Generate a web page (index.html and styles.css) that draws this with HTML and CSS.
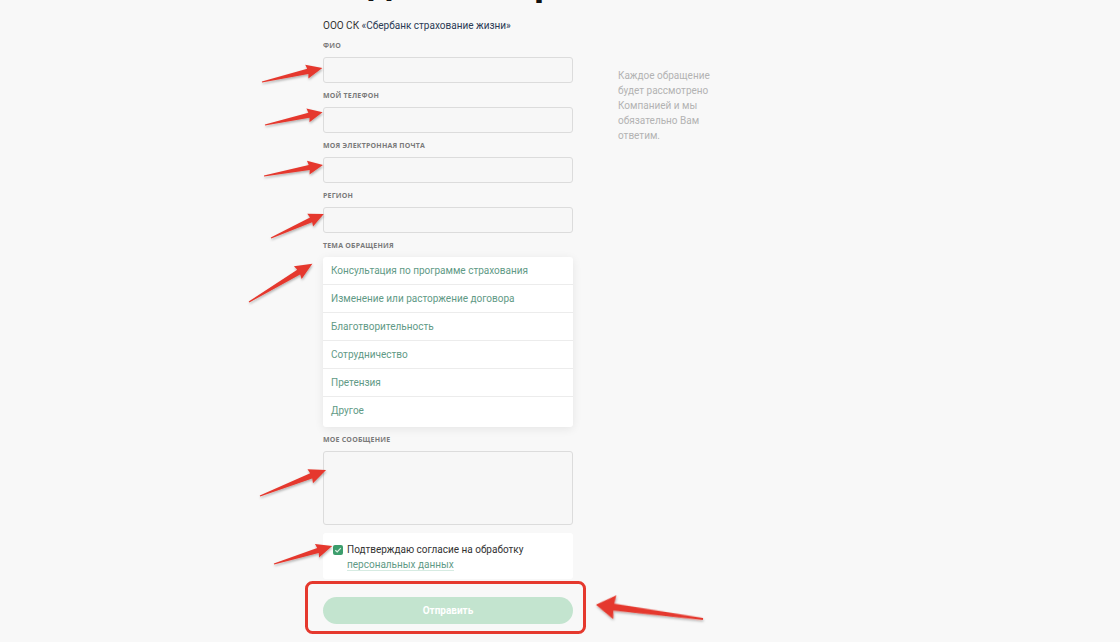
FILE: index.html
```html
<!DOCTYPE html>
<html lang="ru">
<head>
  <meta charset="UTF-8">
  <meta name="viewport" content="width=device-width, initial-scale=1.0">
  <title>Задать вопрос</title>
  <link rel="stylesheet" href="styles.css">
</head>
<body>
  <div class="page">
    <!-- Form column -->
    <form class="feedback-form">
      <h1 class="title">Задать вопрос</h1>
      <p class="company">ООО СК <span class="company-name">«Сбербанк страхование жизни»</span></p>

      <div class="field">
        <label class="field-label">ФИО</label>
        <input class="field-input" type="text">
      </div>
      <div class="field">
        <label class="field-label">Мой телефон</label>
        <input class="field-input" type="text">
      </div>
      <div class="field">
        <label class="field-label">Моя электронная почта</label>
        <input class="field-input" type="text">
      </div>
      <div class="field">
        <label class="field-label">Регион</label>
        <input class="field-input" type="text">
      </div>

      <div class="field">
        <label class="field-label">Тема обращения</label>
        <ul class="topic-list">
          <li>Консультация по программе страхования</li>
          <li>Изменение или расторжение договора</li>
          <li>Благотворительность</li>
          <li>Сотрудничество</li>
          <li>Претензия</li>
          <li>Другое</li>
        </ul>
      </div>

      <div class="field">
        <label class="field-label">Мое сообщение</label>
        <textarea class="field-textarea"></textarea>
      </div>

      <div class="agree-card">
        <span class="checkbox">
          <svg width="10" height="10" viewBox="0 0 10 10"><path d="M2.3 5.2 L4.2 7 L7.8 3.2" fill="none" stroke="#d9f0e2" stroke-width="1.2"/></svg>
        </span>
        <p class="agree-text">Подтверждаю согласие на обработку <a class="agree-link">персональных данных</a></p>
      </div>

      <button class="submit" type="button">Отправить</button>
    </form>

    <!-- Side note -->
    <aside class="note">
      Каждое обращение будет рассмотрено Компанией и мы обязательно Вам ответим.
    </aside>
  </div>

  <!-- Red annotation arrows -->
  <svg class="annotations" width="1120" height="642" viewBox="0 0 1120 642">
    <defs>
      <filter id="arrow-shadow" x="-20%" y="-50%" width="140%" height="200%">
        <feDropShadow dx="0.5" dy="1.5" stdDeviation="0.8" flood-color="#000" flood-opacity="0.3"/>
      </filter>
    </defs>
    <g fill="#e5392e" filter="url(#arrow-shadow)">
      <g transform="translate(262,82) rotate(-13.1)"><polygon points="0,-0.6 47,-2.6 46,-7 62,0 46,7 47,2.6 0,0.6"/></g>
      <g transform="translate(265,125) rotate(-12.6)"><polygon points="0,-0.6 45,-2.6 44,-7 59,0 44,7 45,2.6 0,0.6"/></g>
      <g transform="translate(264,176) rotate(-10.6)"><polygon points="0,-0.6 46,-2.6 45,-7 60,0 45,7 46,2.6 0,0.6"/></g>
      <g transform="translate(271,238) rotate(-24.4)"><polygon points="0,-0.6 44,-2.6 43,-7 58,0 43,7 44,2.6 0,0.6"/></g>
      <g transform="translate(249,302) rotate(-31.1)"><polygon points="0,-0.6 58,-2.8 57,-7.5 74,0 57,7.5 58,2.8 0,0.6"/></g>
      <g transform="translate(260,496) rotate(-21.5)"><polygon points="0,-0.6 55,-2.8 54,-7.5 71,0 54,7.5 55,2.8 0,0.6"/></g>
      <g transform="translate(274,564) rotate(-17.2)"><polygon points="0,-0.6 46,-2.6 45,-7 61,0 45,7 46,2.6 0,0.6"/></g>
      <g transform="translate(703,619) rotate(-172.4)"><polygon points="0,-1 90,-3.5 89,-12 108,0 89,12 90,3.5 0,1"/></g>
    </g>
    <rect x="306.5" y="582.5" width="278" height="50" rx="6" fill="none" stroke="#e5392e" stroke-width="3"/>
  </svg>
</body>
</html>
```

FILE: styles.css
```css
/* General */
body {
  margin: 0;
  padding: 0;
  background: #f8f8f8;
  font-family: Roboto, 'Open Sans', sans-serif;
  color: #333;
  height: 642px;
  overflow: hidden;
  position: relative;
}

.page {
  display: flex;
  align-items: flex-start;
  gap: 45px;
  padding-left: 323px;
}

/* Form */
.feedback-form {
  width: 250px;
  display: flex;
  flex-direction: column;
}

.title {
  margin: -39px 0 0;
  height: 40px;
  font-family: 'Open Sans', sans-serif;
  font-size: 36px;
  line-height: 40px;
  font-weight: 700;
  white-space: nowrap;
  color: #111;
}

.company {
  margin: 17px 0 8px;
  font-size: 10px;
  line-height: 15px;
  color: #333;
}

.company-name {
  color: #2b3a55;
}

.field {
  display: flex;
  flex-direction: column;
  margin-bottom: 8px;
}

.field-label {
  height: 10px;
  line-height: 10px;
  margin-bottom: 6px;
  font-family: 'Open Sans', sans-serif;
  font-size: 7px;
  font-weight: 700;
  letter-spacing: 0.2px;
  text-transform: uppercase;
  color: #7a7a7a;
}

.field-input {
  box-sizing: border-box;
  height: 26px;
  margin: 0;
  border: 1px solid #dcdcdc;
  border-radius: 3px;
  background: #f7f7f7;
  outline: none;
}

.field-textarea {
  box-sizing: border-box;
  height: 74px;
  margin: 0;
  border: 1px solid #dcdcdc;
  border-radius: 3px;
  background: #f7f7f7;
  resize: none;
  outline: none;
}

/* Topic dropdown */
.topic-list {
  list-style: none;
  margin: 0;
  padding: 0 0 2px;
  background: #fff;
  border-radius: 3px;
  box-shadow: 0 2px 10px rgba(0, 0, 0, 0.08);
}

.topic-list li {
  height: 28px;
  line-height: 27px;
  box-sizing: border-box;
  padding: 0 8px;
  font-size: 10px;
  color: #5f9a86;
  border-bottom: 1px solid #ececec;
}

.topic-list li:last-child {
  border-bottom: none;
}

/* Agreement */
.agree-card {
  display: flex;
  align-items: flex-start;
  gap: 4px;
  height: 46px;
  box-sizing: border-box;
  padding: 9px 10px 0;
  background: #fff;
  border-radius: 3px;
}

.checkbox {
  flex: none;
  width: 10px;
  height: 10px;
  margin-top: 3px;
  border-radius: 2px;
  background: #3c9d6c;
  display: flex;
}

.agree-text {
  margin: 0;
  font-size: 10px;
  line-height: 15px;
  color: #333;
}

.agree-link {
  color: #5f9a86;
  border-bottom: 1px solid #d6ebe2;
}

/* Submit */
.submit {
  margin-top: 18px;
  height: 27px;
  border: none;
  border-radius: 14px;
  background: #c3e4cf;
  color: #fff;
  font-family: Roboto, sans-serif;
  font-size: 10px;
  font-weight: 700;
}

/* Side note */
.note {
  width: 100px;
  margin-top: 68px;
  font-size: 10px;
  line-height: 15px;
  color: #b3b3b3;
}

/* Annotation overlay */
.annotations {
  position: absolute;
  top: 0;
  left: 0;
  pointer-events: none;
}
```
